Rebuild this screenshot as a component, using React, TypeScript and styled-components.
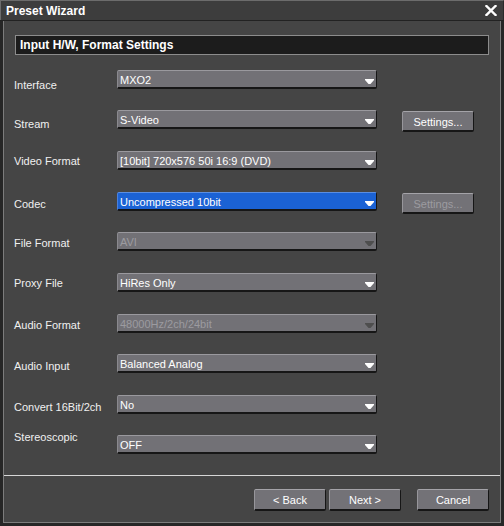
import React from 'react'
import styled, { createGlobalStyle } from 'styled-components'

const GlobalStyle = createGlobalStyle`
  html, body {
    margin: 0;
    padding: 0;
    background: #1e1e1e;
  }
  body {
    font-family: "Liberation Sans", Arial, sans-serif;
    font-size: 11px;
    color: #f2f2f2;
  }
`

type Field = {
  label: string
  value: string
  h: number
  labelTop: number
  highlight?: boolean
  disabled?: boolean
  settings?: 'on' | 'off'
}

const fields: Field[] = [
  { label: 'Interface', value: 'MXO2', h: 40, labelTop: 8 },
  { label: 'Stream', value: 'S-Video', h: 41, labelTop: 7, settings: 'on' },
  { label: 'Video Format', value: '[10bit] 720x576 50i 16:9 (DVD)', h: 41, labelTop: 3 },
  { label: 'Codec', value: 'Uncompressed 10bit', h: 40, labelTop: 5, highlight: true, settings: 'off' },
  { label: 'File Format', value: 'AVI', h: 41, labelTop: 4, disabled: true },
  { label: 'Proxy File', value: 'HiRes Only', h: 41, labelTop: 3 },
  { label: 'Audio Format', value: '48000Hz/2ch/24bit', h: 40, labelTop: 4, disabled: true },
  { label: 'Audio Input', value: 'Balanced Analog', h: 41, labelTop: 5 },
  { label: 'Convert 16Bit/2ch', value: 'No', h: 40, labelTop: 5 },
  { label: 'Stereoscopic', value: 'OFF', h: 40, labelTop: -5 }
]

function Arrow ({ disabled }: { disabled?: boolean }): JSX.Element {
  return (
    <ArrowSvg width="9" height="5" viewBox="0 0 9 5">
      <polygon points="0,0 9,0 9,1 5.5,5 3.5,5 0,1" fill={disabled ? '#4e4e4e' : '#ffffff'} />
    </ArrowSvg>
  )
}

function CloseIcon (): JSX.Element {
  return (
    <svg width="12" height="11" viewBox="0 0 12 11">
      <path d="M1.5 1 L10.5 10 M10.5 1 L1.5 10" stroke="#ffffff" strokeWidth="2.4" strokeLinecap="square" />
    </svg>
  )
}

export default function App (): JSX.Element {
  return (
    <>
      <GlobalStyle />
      <Window>
        <TitleBar>
          <Title>Preset Wizard</Title>
          <CloseIcon />
        </TitleBar>
        <Frame>
          <Panel>
            <Body>
              <Header>Input H/W, Format Settings</Header>
              <Form>
                {fields.map((f) => (
                  <Row key={f.label} $h={f.h}>
                    <Label $top={f.labelTop}>{f.label}</Label>
                    <Select $highlight={f.highlight} $disabled={f.disabled}>
                      <SelectText $disabled={f.disabled}>{f.value}</SelectText>
                      <Arrow disabled={f.disabled} />
                    </Select>
                    {f.settings && (
                      <SettingsButton $disabled={f.settings === 'off'}>Settings...</SettingsButton>
                    )}
                  </Row>
                ))}
              </Form>
            </Body>
            <Footer>
              <Button>&lt; Back</Button>
              <Button>Next &gt;</Button>
              <CancelButton>Cancel</CancelButton>
            </Footer>
          </Panel>
        </Frame>
      </Window>
    </>
  )
}

const Window = styled.div`
  width: 504px;
  height: 526px;
  display: flex;
  flex-direction: column;
  background: #1e1e1e;
`

const TitleBar = styled.div`
  height: 21px;
  box-sizing: border-box;
  display: flex;
  align-items: center;
  justify-content: space-between;
  padding: 0 6px 0 5px;
  background: #3d3d3d;
  border-top: 1px solid #6c6c6c;
  border-left: 1px solid #6c6c6c;
  border-right: 1px solid #2a2a2a;
`

const Title = styled.span`
  font-weight: bold;
  font-size: 12px;
  color: #ffffff;
`

const Frame = styled.div`
  flex: 1;
  display: flex;
  border-top: 1px solid #222222;
  padding: 0 3px 3px 3px;
  background: #262626;
`

const Panel = styled.div`
  flex: 1;
  display: flex;
  flex-direction: column;
  background: #454545;
  border: 1px solid #7c7c7c;
  border-top: none;
`

const Body = styled.div`
  flex: 1;
  padding: 14px 10px 0 10px;
  display: flex;
  flex-direction: column;
`

const Header = styled.div`
  margin-left: 1px;
  width: 474px;
  height: 20px;
  box-sizing: border-box;
  background: #1c1c1c;
  border: 1px solid #8c8c8c;
  padding-left: 4px;
  font-weight: bold;
  font-size: 12px;
  line-height: 18px;
  color: #ffffff;
`

const Form = styled.div`
  margin-top: 15px;
  display: flex;
  flex-direction: column;
`

const Row = styled.div<{ $h: number }>`
  height: ${(p) => p.$h}px;
  display: flex;
  align-items: flex-start;
`

const Label = styled.div<{ $top: number }>`
  width: 103px;
  margin-top: ${(p) => p.$top}px;
  line-height: 14px;
  color: #f0f0f0;
  white-space: nowrap;
`

const Select = styled.div<{ $highlight?: boolean, $disabled?: boolean }>`
  width: 260px;
  height: 19px;
  box-sizing: border-box;
  display: flex;
  align-items: center;
  justify-content: space-between;
  padding: 0 2px 0 2px;
  border-radius: 2px;
  background: ${(p) => (p.$highlight ? '#1b62d4' : '#727176')};
  border-top: 1px solid ${(p) => (p.$highlight ? '#5a8ee2' : '#9a999e')};
  border-left: 1px solid ${(p) => (p.$highlight ? '#4a80dc' : '#8a898e')};
  border-right: 1px solid #161616;
  border-bottom: 2px solid #161616;
`

const SelectText = styled.span<{ $disabled?: boolean }>`
  color: ${(p) => (p.$disabled ? '#9c9ba0' : '#ffffff')};
  line-height: 16px;
  padding-top: 2px;
  white-space: nowrap;
`

const ArrowSvg = styled.svg`
  margin-top: 4px;
  flex-shrink: 0;
`

const ButtonBase = styled.div`
  width: 72px;
  height: 22px;
  box-sizing: border-box;
  display: flex;
  align-items: center;
  justify-content: center;
  padding-top: 1px;
  border-radius: 2px;
  background: #737277;
  border-top: 1px solid #a4a3a8;
  border-left: 1px solid #97969b;
  border-right: 1px solid #161616;
  border-bottom: 2px solid #161616;
  color: #ffffff;
`

const SettingsButton = styled(ButtonBase)<{ $disabled?: boolean }>`
  margin-left: 25px;
  margin-top: 1px;
  height: 21px;
  color: ${(p) => (p.$disabled ? '#9c9ba0' : '#ffffff')};
`

const Button = styled(ButtonBase)``

const CancelButton = styled(ButtonBase)`
  margin-left: 13px;
`

const Footer = styled.div`
  height: 47px;
  box-sizing: border-box;
  border-top: 1px solid #d6d6d6;
  display: flex;
  justify-content: flex-end;
  align-items: flex-start;
  gap: 3px;
  padding: 13px 11px 0 0;
`
